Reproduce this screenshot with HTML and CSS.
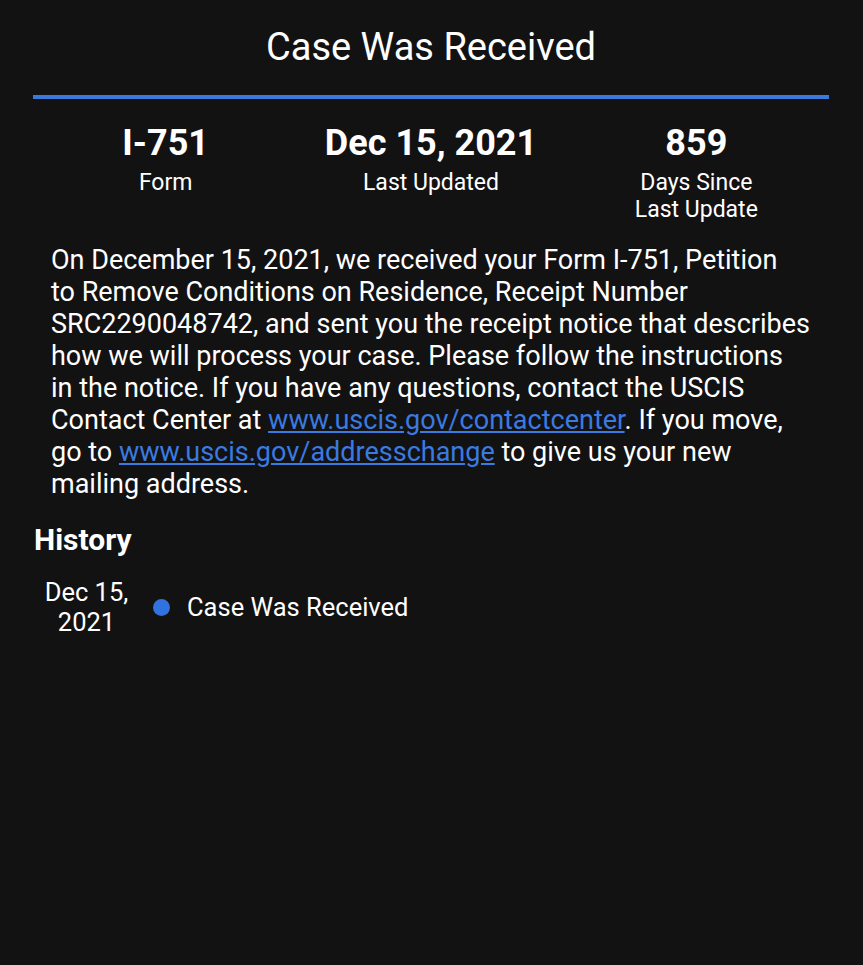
FILE: index.html
```html
<!DOCTYPE html>
<html lang="en">
<head>
<meta charset="utf-8">
<title>Case Status</title>
<link rel="stylesheet" href="styles.css">
</head>
<body>
<main class="page">
  <h1 class="title">Case Was Received</h1>
  <div class="divider"></div>
  <section class="stats">
    <div class="stat">
      <div class="stat-value">I-751</div>
      <div class="stat-label">Form</div>
    </div>
    <div class="stat">
      <div class="stat-value">Dec 15, 2021</div>
      <div class="stat-label">Last Updated</div>
    </div>
    <div class="stat">
      <div class="stat-value">859</div>
      <div class="stat-label">Days Since<br>Last Update</div>
    </div>
  </section>
  <p class="description">On December 15, 2021, we received your Form I-751, Petition<br>to Remove Conditions on Residence, Receipt Number<br>SRC2290048742, and sent you the receipt notice that describes<br>how we will process your case. Please follow the instructions<br>in the notice. If you have any questions, contact the USCIS<br>Contact Center at <a href="#">www.uscis.gov/contactcenter</a>. If you move,<br>go to <a href="#">www.uscis.gov/addresschange</a> to give us your new<br>mailing address.</p>
  <h2 class="history-title">History</h2>
  <ul class="history">
    <li class="history-item">
      <div class="history-date">Dec 15,<br>2021</div>
      <span class="history-dot"></span>
      <div class="history-status">Case Was Received</div>
    </li>
  </ul>
</main>
</body>
</html>
```
FILE: styles.css
```css
* { box-sizing: border-box; }
html, body {
  margin: 0;
  padding: 0;
  background: #121212;
  color: #ffffff;
  font-family: Roboto, "Noto Sans", sans-serif;
}
.page {
  padding: 24px 34px 0 33px;
  min-height: 965px;
}
.title {
  margin: 0;
  font-size: 38px;
  font-weight: 400;
  line-height: 46px;
  text-align: center;
}
.divider {
  margin-top: 25px;
  height: 4px;
  background: #3a78dc;
}
.stats {
  display: grid;
  grid-template-columns: repeat(3, 1fr);
  margin-top: 23px;
  text-align: center;
}
.stat-value {
  font-size: 36px;
  font-weight: 700;
  line-height: 42px;
}
.stat-label {
  margin-top: 5px;
  font-size: 23px;
  line-height: 27px;
}
.description {
  margin: 21px 0 0 18px;
  font-size: 27px;
  line-height: 32px;
  white-space: nowrap;
}
.description a {
  color: #3b7ae0;
  text-decoration: underline;
}
.history-title {
  margin: 22px 0 0 1px;
  font-size: 30px;
  font-weight: 700;
  line-height: 36px;
}
.history {
  list-style: none;
  margin: 19px 0 0;
  padding: 0;
}
.history-item {
  display: flex;
  align-items: center;
}
.history-date {
  width: 107px;
  text-align: center;
  font-size: 25.5px;
  line-height: 30px;
}
.history-dot {
  width: 17px;
  height: 17px;
  border-radius: 50%;
  background: #2f72e0;
  margin-left: 13px;
}
.history-status {
  margin-left: 17px;
  font-size: 25.5px;
  line-height: 30px;
}
```
